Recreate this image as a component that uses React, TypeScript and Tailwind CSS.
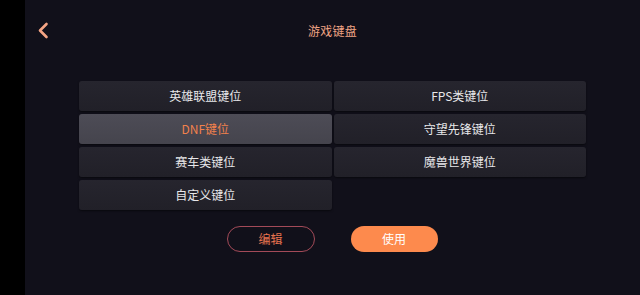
const keys = [
  "英雄联盟键位",
  "FPS类键位",
  "DNF键位",
  "守望先锋键位",
  "赛车类键位",
  "魔兽世界键位",
  "自定义键位",
];

const font = { fontFamily: '"Noto Sans CJK SC", "Noto Sans", sans-serif' };

export default function App() {
  const selected = 2;
  return (
    <div className="flex h-[295px] w-[640px] bg-black" style={font}>
      <div className="w-[25px] shrink-0 bg-black" />
      <div className="relative flex flex-1 flex-col bg-[#11101a]">
        <header className="relative flex h-[62px] items-center justify-center">
          <button className="absolute left-[12px] top-[22px] text-[#f5a585]">
            <svg width="12" height="17" viewBox="0 0 12 17" fill="none">
              <path
                d="M9.5 2 L3 8.5 L9.5 15"
                stroke="currentColor"
                strokeWidth="2.6"
                strokeLinecap="round"
                strokeLinejoin="round"
              />
            </svg>
          </button>
          <h1 className="text-[12px] text-[#f0a585] tracking-wide">游戏键盘</h1>
        </header>

        <div className="mt-[19px] ml-[54px] grid w-[507px] grid-cols-2 gap-x-[2px] gap-y-[3px]">
          {keys.map((k, i) => (
            <button
              key={k}
              className={`h-[30px] rounded-[3px] text-[12px] shadow-[0_1px_2px_rgba(0,0,0,0.5)] ${
                i === selected
                  ? "bg-gradient-to-b from-[#4d4c56] to-[#45444d] text-[#f2814c]"
                  : "bg-gradient-to-b from-[#26252e] to-[#212028] text-[#e8e8ea]"
              }`}
            >
              {k}
            </button>
          ))}
        </div>

        <div className="mt-[16px] flex justify-center gap-[36px] pr-[1px]">
          <button className="h-[26px] w-[88px] rounded-full border border-[#a34a58] text-[12px] text-[#e8734f]">
            编辑
          </button>
          <button className="h-[26px] w-[87px] rounded-full bg-[#fd8a4d] text-[12px] text-white">
            使用
          </button>
        </div>
      </div>
    </div>
  );
}
